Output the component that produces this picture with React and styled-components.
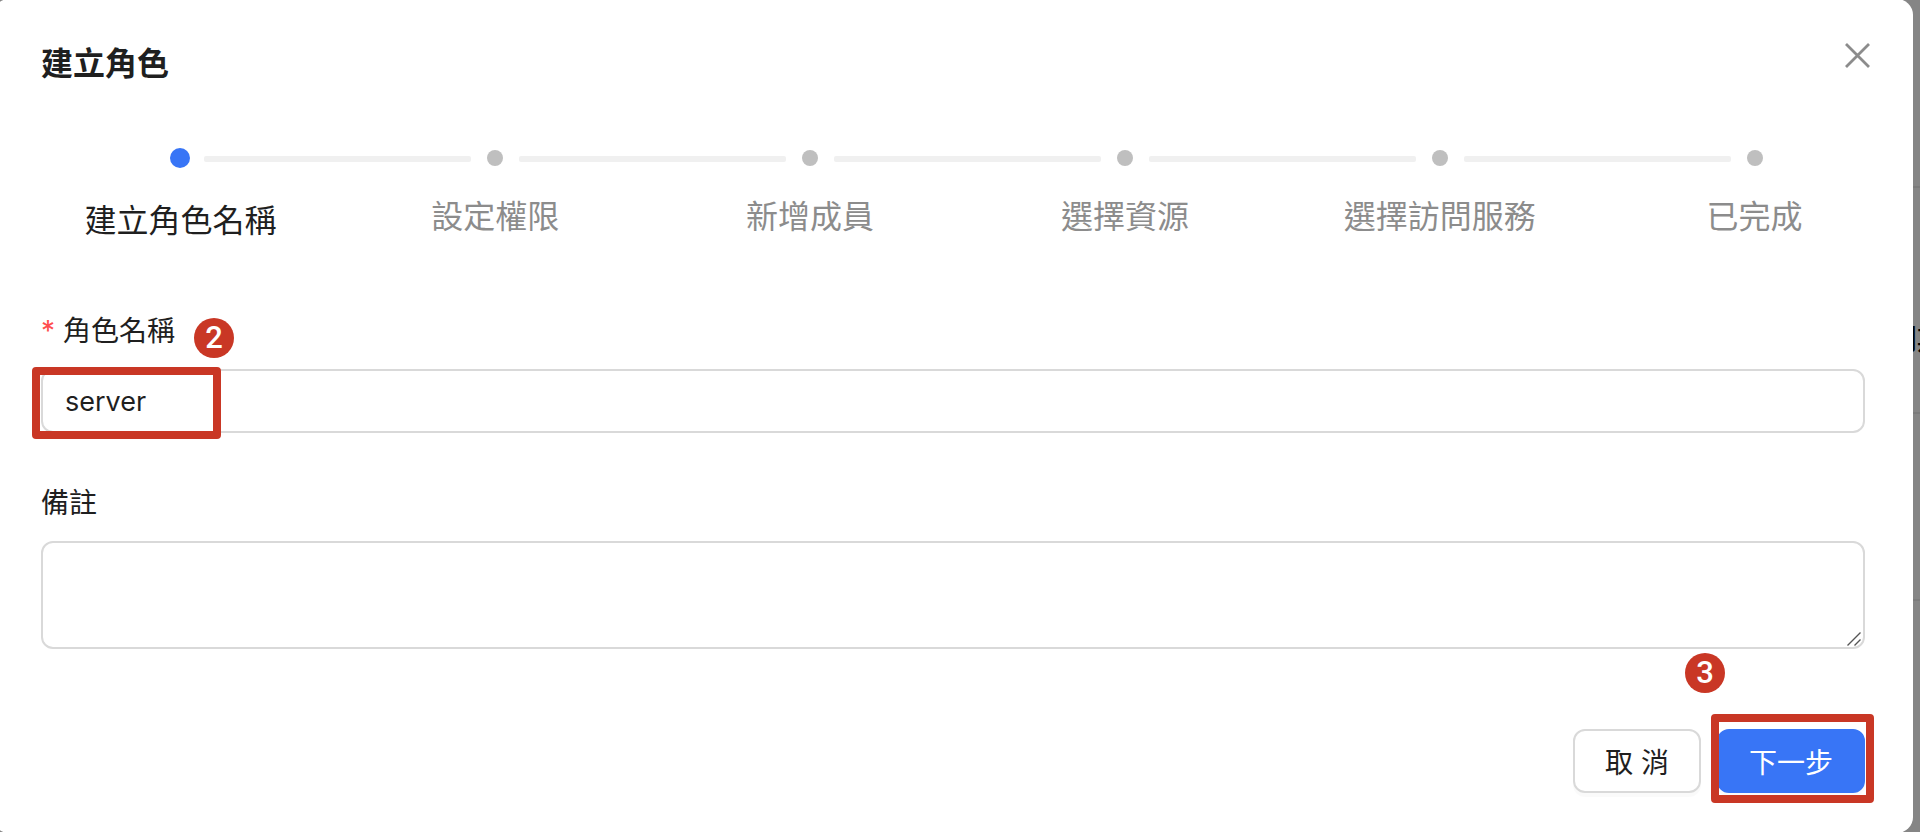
import React from "react";
import styled, { createGlobalStyle } from "styled-components";

const GlobalStyle = createGlobalStyle`
    * {
        box-sizing: border-box;
    }
    body {
        margin: 0;
        overflow: hidden;
        background-color: #858585;
        color: #1f1f1f;
        font-family: Inter, "Noto Sans CJK TC", sans-serif;
    }
`
const Page = styled.div`
    position: relative;
    min-height: 100vh;
`
const PageRows = styled.div`
    position: absolute;
    inset: 0;
    display: flex;
    flex-direction: column;
    overflow: hidden;
`
const PageRow = styled.div`
    flex: none;
    display: flex;
    align-items: flex-end;
    height: ${props => props.$height}px;
    padding: 0 0 52px calc(100% - 31px);
    border-bottom: 2px solid #7b7b7b;
    color: black;
    font-size: 28px;
    line-height: 40px;
    font-weight: 500;
    white-space: nowrap;
`
const Dialog = styled.section`
    position: relative;
    margin: -1px 7px -1px -7px;
    padding: 41px 48px 40px;
    border-radius: 16px;
    background-color: white;
`
const Header = styled.header`
    display: flex;
    justify-content: space-between;
    align-items: flex-start;
`
const Title = styled.h1`
    margin: 0;
    font-size: 32px;
    line-height: 48px;
    font-weight: 700;
`
const CloseButton = styled.button`
    display: flex;
    margin-right: -10px;
    padding: 1px 2px;
    border: none;
    background: none;
    cursor: pointer;
`
const StepList = styled.ol`
    display: grid;
    grid-template-columns: repeat(6, 1fr);
    margin: 60px -47px 0 -18px;
    padding: 0;
    list-style: none;
`
const Step = styled.li`
    display: flex;
    flex-direction: column;
    align-items: center;
    color: ${props => props.$active ? "#1f1f1f" : "#8c8c8c"};
    font-size: 32px;
    line-height: 48px;
`
const StepTrack = styled.div`
    position: relative;
    display: flex;
    align-items: center;
    justify-content: center;
    width: 100%;
    height: 20px;
`
const StepDot = styled.span`
    width: ${props => props.$active ? 20 : 16}px;
    height: ${props => props.$active ? 20 : 16}px;
    border-radius: 50%;
    background-color: ${props => props.$active ? "#3875f6" : "#bfbfbf"};
`
const StepTail = styled.span`
    position: absolute;
    top: 8px;
    left: calc(50% + 24px);
    width: calc(100% - 48px);
    height: 6px;
    border-radius: 2px;
    background-color: #f0f0f0;
`
const StepLabel = styled.span`
    margin-top: ${props => props.$active ? 29 : 25}px;
`
const Form = styled.form`
    display: flex;
    flex-direction: column;
    margin-top: 64px;
`
const Field = styled.div`
    display: flex;
    flex-direction: column;
    gap: 16px;
    margin-bottom: 48px;
`
const LabelRow = styled.div`
    display: flex;
    align-items: center;
    height: 44px;
    font-size: 28px;
    line-height: 44px;
`
const Required = styled.span`
    width: 22px;
    color: #ff4d4f;
    line-height: 44px;
`
const InputWrap = styled.div`
    position: relative;
`
const TextInput = styled.input`
    display: block;
    width: 100%;
    height: 64px;
    padding: 0 22px;
    border: 2px solid #d9d9d9;
    border-radius: 12px;
    outline: none;
    color: inherit;
    font: inherit;
    font-size: 27px;
`
const TextArea = styled.textarea`
    display: block;
    width: 100%;
    height: 108px;
    padding: 8px 22px;
    border: 2px solid #d9d9d9;
    border-radius: 12px;
    outline: none;
    resize: none;
    font: inherit;
    font-size: 27px;
`
const Grip = styled.svg`
    position: absolute;
    right: 4px;
    bottom: 3px;
`
const Footer = styled.footer`
    display: flex;
    justify-content: flex-end;
    gap: 16px;
    margin-top: 32px;
`
const Button = styled.button`
    height: 64px;
    padding: 0 30px;
    border: 2px solid ${props => props.$primary ? "#3875f6" : "#d9d9d9"};
    border-radius: 12px;
    background-color: ${props => props.$primary ? "#3875f6" : "white"};
    color: ${props => props.$primary ? "white" : "#1f1f1f"};
    box-shadow: 0 4px 0 rgba(0, 0, 0, 0.02);
    font: inherit;
    font-size: 28px;
    cursor: pointer;
`
const ButtonWrap = styled.div`
    position: relative;
`
const Highlight = styled.span`
    position: absolute;
    inset: ${props => props.$inset};
    width: ${props => props.$width || "auto"};
    border: 8px solid #c93725;
    border-radius: 4px;
    pointer-events: none;
`
const Badge = styled.span`
    display: flex;
    align-items: center;
    justify-content: center;
    width: 40px;
    height: 40px;
    border-radius: 50%;
    background-color: #c93725;
    color: white;
    font-family: Roboto, sans-serif;
    font-size: 31px;
    line-height: 40px;
    font-weight: 500;
`
const LabelBadge = styled(Badge)`
    position: relative;
    top: 7px;
    margin-left: 19px;
`
const ButtonBadge = styled(Badge)`
    position: absolute;
    top: -76px;
    left: -32px;
`

const steps = ["建立角色名稱", "設定權限", "新增成員", "選擇資源", "選擇訪問服務", "已完成"]

const App = () => {
    return(
        <Page>
            <GlobalStyle />
            <PageRows aria-hidden="true">
                <PageRow $height={189} />
                <PageRow $height={226}>到期日</PageRow>
                <PageRow $height={187} />
            </PageRows>
            <Dialog role="dialog" aria-labelledby="dialog-title">
                <Header>
                    <Title id="dialog-title">建立角色</Title>
                    <CloseButton type="button" aria-label="關閉">
                        <svg width="32" height="28" viewBox="0 0 32 28" fill="none" stroke="#8c8c8c" strokeWidth="2.8">
                            <path d="M5 3 L28 26 M28 3 L5 26" />
                        </svg>
                    </CloseButton>
                </Header>
                <StepList>
                    {steps.map((step, i) => (
                        <Step key={step} $active={i === 0} aria-current={i === 0 ? "step" : undefined}>
                            <StepTrack>
                                <StepDot $active={i === 0} />
                                {i < steps.length - 1 && <StepTail />}
                            </StepTrack>
                            <StepLabel $active={i === 0}>{step}</StepLabel>
                        </Step>
                    ))}
                </StepList>
                <Form>
                    <Field>
                        <LabelRow>
                            <Required>*</Required>
                            <label htmlFor="role-name">角色名稱</label>
                            <LabelBadge>2</LabelBadge>
                        </LabelRow>
                        <InputWrap>
                            <TextInput id="role-name" type="text" defaultValue="server" required />
                            <Highlight $inset="-2px auto -6px -9px" $width="189px" />
                        </InputWrap>
                    </Field>
                    <Field>
                        <LabelRow>
                            <label htmlFor="remark">備註</label>
                        </LabelRow>
                        <InputWrap>
                            <TextArea id="remark" />
                            <Grip width="14" height="14" viewBox="0 0 14 14" fill="none" stroke="#555" strokeWidth="1.4">
                                <path d="M0.5 13.5 L13.5 0.5 M7.5 13.5 L13.5 7.5" />
                            </Grip>
                        </InputWrap>
                    </Field>
                    <Footer>
                        <Button type="button">取 消</Button>
                        <ButtonWrap>
                            <Button type="button" $primary>下一步</Button>
                            <Highlight $inset="-15px -9px -10px -6px" />
                            <ButtonBadge>3</ButtonBadge>
                        </ButtonWrap>
                    </Footer>
                </Form>
            </Dialog>
        </Page>
    )
}

export default App;
